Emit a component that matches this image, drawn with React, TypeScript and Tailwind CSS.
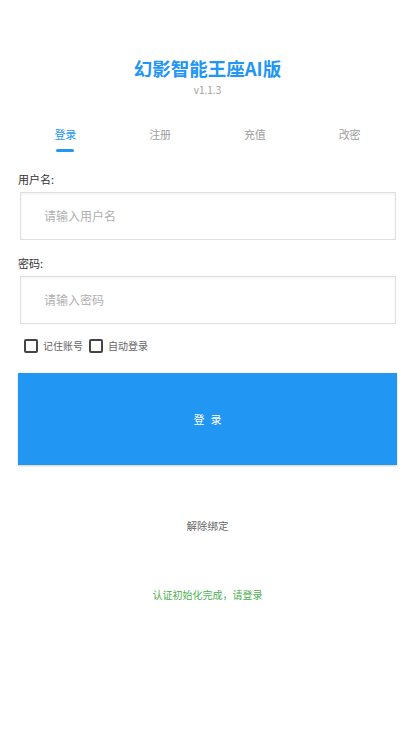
import React from "react";

export default function App() {
  const font = { fontFamily: '"Noto Sans CJK SC", "Noto Sans", Roboto, sans-serif' };
  return (
    <div className="w-[415px] h-[737px] bg-white flex flex-col" style={font}>
      <div className="pt-[55px] flex flex-col items-center">
        <div className="h-[26px] text-[18.5px] leading-[26px] font-bold text-[#2196f3]">幻影智能王座AI版</div>
        <div className="h-[14px] mt-[2px] text-[10px] leading-[14px] text-[#9e9e9e]">v1.1.3</div>
      </div>
      <div className="mx-[18px] mt-[29px] grid grid-cols-4">
        {["登录", "注册", "充值", "改密"].map((t, i) => (
          <div key={t} className="flex flex-col items-center">
            <div className={`h-[16px] text-[11px] leading-[16px] ${i === 0 ? "text-[#2196f3]" : "text-[#9e9e9e]"}`}>{t}</div>
            <div className={`mt-[7px] h-[3px] w-[18px] rounded-full ${i === 0 ? "bg-[#2196f3]" : "bg-transparent"}`} />
          </div>
        ))}
      </div>
      <div className="mx-[18px] mt-[20px]">
        <div className="h-[14px] text-[11px] leading-[14px] text-[#333]">用户名:</div>
        <div className="mt-[6px] ml-[2px] mr-[1px] h-[48px] border border-[#e0e0e0] shadow-[inset_0_1px_3px_rgba(0,0,0,0.06)] flex items-center pl-[23px]">
          <span className="text-[12px] leading-[16px] text-[#b0b0b0]">请输入用户名</span>
        </div>
        <div className="mt-[16px] h-[14px] text-[11px] leading-[14px] text-[#333]">密码:</div>
        <div className="mt-[6px] ml-[2px] mr-[1px] h-[48px] border border-[#e0e0e0] shadow-[inset_0_1px_3px_rgba(0,0,0,0.06)] flex items-center pl-[23px]">
          <span className="text-[12px] leading-[16px] text-[#b0b0b0]">请输入密码</span>
        </div>
        <div className="mt-[15px] ml-[6px] flex items-center h-[14px]">
          <div className="w-[14px] h-[14px] border-2 border-[#444] rounded-[2px]" />
          <span className="ml-[5px] text-[10px] leading-[14px] text-[#666]">记住账号</span>
          <div className="ml-[6px] w-[14px] h-[14px] border-2 border-[#444] rounded-[2px]" />
          <span className="ml-[5px] text-[10px] leading-[14px] text-[#666]">自动登录</span>
        </div>
        <div className="mt-[20px] h-[92px] bg-[#2196f3] shadow-[0_1px_2px_rgba(0,0,0,0.2)] flex items-center justify-center">
          <span className="text-[11px] leading-[14px] text-white tracking-[6px] pl-[6px]">登录</span>
        </div>
      </div>
      <div className="mt-[54px] h-[14px] text-center text-[10.5px] leading-[14px] text-[#666]">解除绑定</div>
      <div className="mt-[55px] h-[14px] text-center text-[10px] leading-[14px] text-[#4caf50]">认证初始化完成，请登录</div>
    </div>
  );
}
